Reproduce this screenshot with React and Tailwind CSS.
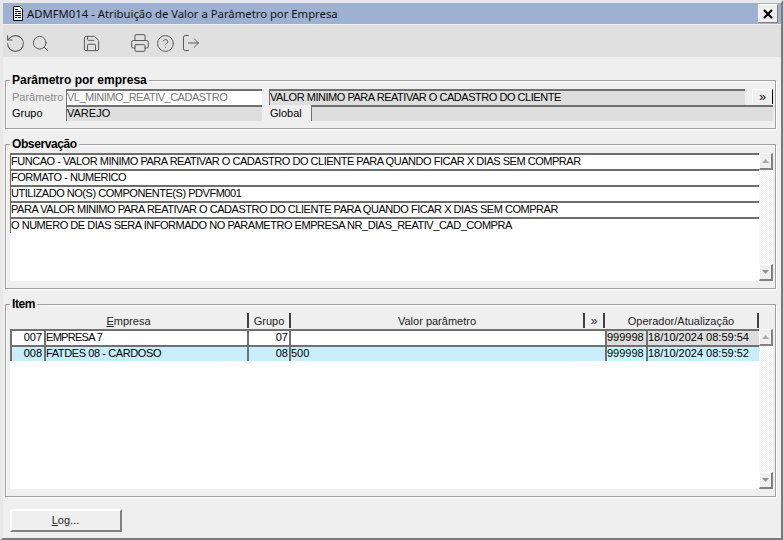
import React from "react";
import { RotateCcw, Search, Save, Printer, CircleHelp, LogOut } from "lucide-react";

function Group({ title, titleClass, className, children }) {
  return (
    <div className={`relative ml-[2px] w-[771px] shrink-0 border border-[#a0a0a0] shadow-[1px_1px_0_#ffffff,inset_1px_1px_0_#ffffff] ${className}`}>
      <span className={`absolute left-[4px] top-[-8px] bg-[#efefef] px-[2px] text-[12px] leading-[15px] font-bold text-black ${titleClass || ""}`}>{title}</span>
      {children}
    </div>
  );
}

function ScrollBtn({ dir }) {
  return (
    <div className="flex h-[17px] w-[14px] items-center justify-center border-t border-l border-t-white border-l-white border-b-2 border-r-2 border-b-[#808080] border-r-[#808080] bg-[#efefef]">
      <svg width="7" height="4" viewBox="0 0 7 4">
        {dir === "up" ? <path d="M3.5 0L7 4H0z" fill="#a8a8a8" /> : <path d="M3.5 4L7 0H0z" fill="#909090" />}
      </svg>
    </div>
  );
}

function ScrollTrack({ className }) {
  return (
    <div className={`flex w-[14px] shrink-0 flex-col justify-between bg-[repeating-conic-gradient(#f2f2f2_0_25%,#ffffff_0_50%)] bg-[length:2px_2px] ${className || ""}`}>
      <ScrollBtn dir="up" />
      <ScrollBtn dir="down" />
    </div>
  );
}

function ObsLine({ text }) {
  return (
    <div className="h-[16px] truncate border-t-2 border-l border-t-[#6e6e6e] border-l-[#6e6e6e] bg-white text-[11px] leading-[12px] tracking-[-0.47px] text-black">
      {text}
    </div>
  );
}

function Sunken({ className, children }) {
  return (
    <div className={`h-[16px] truncate border-t-2 border-l border-t-[#707070] border-l-[#707070] text-[11px] leading-[12px] ${className}`}>
      {children}
    </div>
  );
}

function HeadCell({ className, children }) {
  return (
    <div className={`flex h-[15px] items-center justify-center border-r-2 border-r-[#404040] pt-[2px] text-[11px] leading-[13px] text-[#222222] ${className}`}>
      {children}
    </div>
  );
}

function Row({ code, name, nameClass, grupo, valor, op, date, selected }) {
  const bg = selected ? "bg-[#c9eefb]" : "bg-white";
  const cell = "h-[16px] border-t-2 border-l-2 border-t-[#707070] border-l-[#707070] text-[11px] leading-[12px] text-black truncate";
  return (
    <div className="flex">
      <div className={`${cell} ${bg} w-[34px] pr-[2px] text-right`}>{code}</div>
      <div className={`${cell} ${bg} w-[203px] ${nameClass}`}>{name}</div>
      <div className={`${cell} ${bg} w-[42px] pr-[1px] text-right`}>{grupo}</div>
      <div className={`${cell} ${bg} w-[316px]`}>{valor}</div>
      <div className={`${cell} ${selected ? "bg-[#c8f8ff]" : "bg-[#dedede]"} w-[41px]`}>{op}</div>
      <div className={`${cell} ${selected ? "bg-[#c9eefb]" : "bg-[#dedede]"} w-[113px]`}>{date}</div>
    </div>
  );
}

export default function App() {
  return (
    <div className="flex h-[540px] w-[783px] flex-col overflow-hidden border-t-[3px] border-l-[3px] border-t-[#e8e8e8] border-l-[#e8e8e8] border-r-2 border-b-2 border-r-[#7a7a7a] border-b-[#7a7a7a] bg-[#efefef] font-['Liberation_Sans',Arial,sans-serif]">
      {/* Title bar */}
      <div className="flex h-[22px] shrink-0 items-center border-b border-b-[#f0f0f0] bg-[#9fb1d3] pl-[9px] pr-[3px]">
        <svg width="12" height="15" viewBox="0 0 12 15" className="shrink-0">
          <path d="M1.5.5h6l3 3v11h-9z" fill="#fff" stroke="#000" />
          <path d="M3 3h3v1H3zM3 5h6v1H3zM3 7h2v1H3zM6 7h3v1H6zM3 9h6v1H3zM3 11h2v1H3zM6 11h3v1H6z" fill="#000" />
        </svg>
        <span className="ml-[3px] font-['Noto_Sans',sans-serif] text-[11.3px] leading-[16px] text-[#111111]">ADMFM014 - Atribuição de Valor a Parâmetro por Empresa</span>
        <div className="ml-auto flex h-[19px] w-[20px] items-center justify-center border border-t-white border-l-white border-b-[#808080] border-r-[#808080] bg-[#efefef]">
          <svg width="10" height="10" viewBox="0 0 10 10"><path d="M1 1l8 8M9 1l-8 8" stroke="#000" strokeWidth="2.2" /></svg>
        </div>
      </div>

      {/* Toolbar */}
      <div className="flex h-[32px] shrink-0 items-center bg-[#e0e0e0] pt-[4px] text-[#5a5a5a]">
        <RotateCcw size={21} strokeWidth={1.15} className="ml-[2px] shrink-0" />
        <Search size={19} strokeWidth={1.25} className="ml-[5px] shrink-0" />
        <Save size={19} strokeWidth={1.25} className="ml-[32px] shrink-0" />
        <Printer size={20} strokeWidth={1.2} className="ml-[29px] shrink-0" />
        <CircleHelp size={19} strokeWidth={1.25} className="ml-[6px] shrink-0" />
        <LogOut size={20} strokeWidth={1.2} className="ml-[6px] shrink-0" />
      </div>

      <div className="flex min-h-0 flex-1 flex-col pt-[23px]">
        {/* Parâmetro por empresa */}
        <Group title="Parâmetro por empresa" className="h-[49px] pt-[8px] pl-[6px]">
          <div className="flex h-[16px]">
            <span className="w-[54px] text-[11px] leading-[16px] text-[#8a8a8a]">Parâmetro</span>
            <Sunken className="w-[196px] bg-white tracking-[-0.5px] text-[#777777]">VL_MINIMO_REATIV_CADASTRO</Sunken>
            <Sunken className="ml-[7px] w-[476px] bg-[#dedede] tracking-[-0.47px] text-black">VALOR MINIMO PARA REATIVAR O CADASTRO DO CLIENTE</Sunken>
            <div className="ml-[7px] flex h-[15px] w-[21px] items-center justify-center border-t border-l border-t-white border-l-white border-r border-r-black text-[12px] leading-[12px] text-black">»</div>
          </div>
          <div className="flex h-[16px]">
            <span className="w-[54px] text-[11px] leading-[16px] text-black">Grupo</span>
            <Sunken className="w-[196px] bg-[#dedede] text-black">VAREJO</Sunken>
            <span className="ml-[8px] w-[41px] text-[11px] leading-[16px] text-black">Global</span>
            <Sunken className="w-[462px] bg-[#dedede]"></Sunken>
          </div>
        </Group>

        {/* Observação */}
        <Group title="Observação" titleClass="tracking-[-0.4px]" className="mt-[15px] h-[145px] pt-[8px] pl-[4px] pr-[2px]">
          <div className="flex h-[128px]">
            <div className="min-w-0 flex-1">
              <ObsLine text="FUNCAO - VALOR MINIMO PARA REATIVAR O CADASTRO DO CLIENTE PARA QUANDO FICAR X DIAS SEM COMPRAR" />
              <ObsLine text="FORMATO - NUMERICO" />
              <ObsLine text="UTILIZADO NO(S) COMPONENTE(S) PDVFM001" />
              <ObsLine text="PARA VALOR MINIMO PARA REATIVAR O CADASTRO DO CLIENTE PARA QUANDO FICAR X DIAS SEM COMPRAR" />
              <ObsLine text="O NUMERO DE DIAS SERA INFORMADO NO PARAMETRO EMPRESA NR_DIAS_REATIV_CAD_COMPRA" />
              <div className="h-[48px] bg-white"></div>
            </div>
            <ScrollTrack />
          </div>
        </Group>

        {/* Item */}
        <Group title="Item" titleClass="tracking-[-0.4px]" className="mt-[15px] h-[193px] pt-[8px] pl-[4px] pr-[2px]">
          <div className="flex h-[176px]">
            <div className="min-w-0 flex-1">
              <div className="flex h-[16px] items-start">
                <HeadCell className="w-[239px]"><span><u>E</u>mpresa</span></HeadCell>
                <HeadCell className="w-[42px]">Grupo</HeadCell>
                <HeadCell className="w-[294px]">Valor parâmetro</HeadCell>
                <HeadCell className="w-[20px] text-[12px]">»</HeadCell>
                <HeadCell className="w-[154px]">Operador/Atualização</HeadCell>
              </div>
              <Row code="007" name="EMPRESA 7" nameClass="tracking-[-0.7px]" grupo="07" valor="" op="999998" date="18/10/2024 08:59:54" />
              <Row code="008" name="FATDES 08 - CARDOSO" nameClass="tracking-[-0.4px]" grupo="08" valor="500" op="999998" date="18/10/2024 08:59:52" selected />
              <div className="h-[128px] bg-white"></div>
            </div>
            <ScrollTrack className="mt-[16px]" />
          </div>
        </Group>

        {/* Footer */}
        <div className="mt-[12px] ml-[7px] flex h-[23px] w-[112px] items-center justify-center border-t-2 border-l-2 border-t-white border-l-white border-b-2 border-r-2 border-b-[#808080] border-r-[#808080] bg-[#efefef] pr-[1px] text-[11px] text-[#222222]">
          <span><u>L</u>og...</span>
        </div>
      </div>
    </div>
  );
}
